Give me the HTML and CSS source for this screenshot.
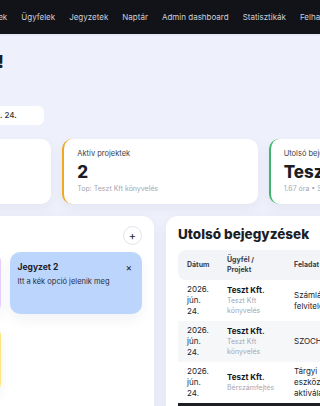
FILE: index.html
```html
<!DOCTYPE html>
<html lang="hu">
<head>
    <meta charset="UTF-8">
    <meta name="viewport" content="width=device-width, initial-scale=1.0">
    <title>Irányítópult</title>
    <link rel="stylesheet" href="styles.css">
</head>
<body>
<div class="page">
    <nav class="topbar">
        <span class="brand">Könyvelő</span>
        <a href="#">Főoldal</a>
        <a href="#">Projektek</a>
        <a href="#">Ügyfelek</a>
        <a href="#">Jegyzetek</a>
        <a href="#">Naptár</a>
        <a href="#">Admin dashboard</a>
        <a href="#">Statisztikák</a>
        <a href="#">Felhasználók</a>
    </nav>

    <main class="content">
        <h1 class="greeting">Üdv újra, Admin!</h1>
        <p class="subtitle">Áttekintés</p>
        <div class="today">
            <span class="today-label">Napi áttekintés dátuma:</span>
            <span class="date-pill">2026. jún. 24.</span>
        </div>

        <section class="stats">
            <div class="stat-card stat-blue">
                <div class="stat-label">Mai munkaidő</div>
                <div class="stat-value">3.2 óra</div>
                <div class="stat-sub">2 bejegyzés</div>
            </div>
            <div class="stat-card stat-orange">
                <div class="stat-label">Aktív projektek</div>
                <div class="stat-value">2</div>
                <div class="stat-sub">Top: Teszt Kft könyvelés</div>
            </div>
            <div class="stat-card stat-green">
                <div class="stat-label">Utolsó bejegyzés</div>
                <div class="stat-value">Teszt Kft.</div>
                <div class="stat-sub">1.67 óra • Számlák felvitele</div>
            </div>
        </section>

        <section class="lower">
            <div class="panel notes-panel">
                <div class="panel-head">
                    <h2>Jegyzetek</h2>
                    <button class="add-btn" type="button">+</button>
                </div>
                <div class="notes-grid">
                    <div class="note note-purple">
                        <div class="note-head"><b>Jegyzet 1</b><span class="note-close">×</span></div>
                        <p>Lila jegyzet</p>
                    </div>
                    <div class="note note-blue">
                        <div class="note-head"><b>Jegyzet 2</b><span class="note-close">×</span></div>
                        <p>Itt a kék opció jelenik meg</p>
                    </div>
                    <div class="note note-yellow">
                        <div class="note-head"><b>Jegyzet 3</b><span class="note-close">×</span></div>
                        <p>Sárga jegyzet</p>
                    </div>
                </div>
            </div>

            <div class="panel entries-panel">
                <h2>Utolsó bejegyzések</h2>
                <div class="table-wrap">
                    <table>
                        <colgroup>
                            <col class="col-date">
                            <col class="col-client">
                            <col class="col-task">
                            <col class="col-hours">
                        </colgroup>
                        <thead>
                        <tr>
                            <th>Dátum</th>
                            <th>Ügyfél / Projekt</th>
                            <th>Feladat</th>
                            <th>Óra</th>
                        </tr>
                        </thead>
                        <tbody>
                        <tr>
                            <td>2026. jún. 24.</td>
                            <td><div class="client">Teszt Kft.</div><div class="project">Teszt Kft könyvelés</div></td>
                            <td>Számlák felvitele</td>
                            <td>1.67</td>
                        </tr>
                        <tr>
                            <td>2026. jún. 24.</td>
                            <td><div class="client">Teszt Kft.</div><div class="project">Teszt Kft könyvelés</div></td>
                            <td>SZOCHO</td>
                            <td>0.5</td>
                        </tr>
                        <tr>
                            <td>2026. jún. 24.</td>
                            <td><div class="client">Teszt Kft.</div><div class="project">Bérszámfejtés</div></td>
                            <td>Tárgyi eszköz aktiválása</td>
                            <td>1.0</td>
                        </tr>
                        </tbody>
                    </table>
                </div>
            </div>
        </section>
    </main>
</div>
</body>
</html>
```

FILE: styles.css
```css
body {
    margin: 0;
    background: #eef0fb;
    font-family: Inter, "Noto Sans", sans-serif;
    color: #1c1e26;
    overflow: hidden;
}

.page {
    width: 640px;
    margin-left: -160px;
}

.topbar {
    display: flex;
    align-items: center;
    gap: 14px;
    height: 34px;
    padding: 0 16px 0 27px;
    background: #121318;
    border-bottom: 2px solid #e6e8f3;
    font-size: 8px;
}

.topbar .brand {
    color: #fff;
    font-weight: 700;
    font-size: 10px;
    margin-right: 4px;
}

.topbar a {
    color: #cdd0d8;
    text-decoration: none;
    white-space: nowrap;
}

.content {
    padding: 14px 16px 0;
}

.greeting {
    margin: 0;
    font-size: 18px;
    line-height: 24px;
    font-weight: 800;
}

.subtitle {
    margin: 6px 0 0;
    font-size: 8px;
    line-height: 12px;
    color: #8a8fa0;
}

.today {
    display: flex;
    align-items: center;
    gap: 11px;
    margin-top: 14px;
    font-size: 8px;
}

.today-label {
    color: #8a8fa0;
}

.date-pill {
    width: 72px;
    padding: 4px 8px;
    line-height: 11px;
    background: #fff;
    border-radius: 6px;
    color: #333;
    font-weight: 500;
}

.stats {
    display: grid;
    grid-template-columns: repeat(3, minmax(0, 1fr));
    gap: 11px;
    margin-top: 14px;
}

.stat-card {
    background: #fff;
    border-radius: 10px;
    border-left: 2px solid transparent;
    padding: 10px 13px;
    box-shadow: 0 4px 12px rgba(40, 50, 100, 0.05);
}

.stat-blue { border-left-color: #4f7cf0; }
.stat-orange { border-left-color: #f0a81c; }
.stat-green { border-left-color: #3fb66b; }

.stat-label {
    font-size: 7.5px;
    line-height: 10px;
    color: #3a3d47;
}

.stat-value {
    margin-top: 3px;
    font-size: 17px;
    line-height: 20px;
    font-weight: 800;
    white-space: nowrap;
}

.stat-sub {
    margin-top: 2px;
    font-size: 7px;
    line-height: 10px;
    color: #a3a7b3;
    white-space: nowrap;
}

.lower {
    display: grid;
    grid-template-columns: minmax(0, 1fr) minmax(0, 1fr);
    gap: 12px;
    margin-top: 12px;
}

.panel {
    background: #fff;
    border-radius: 12px;
    box-shadow: 0 4px 14px rgba(40, 50, 100, 0.06);
    height: 260px;
}

.notes-panel {
    padding: 10px 12px;
}

.panel-head {
    display: flex;
    align-items: center;
    justify-content: space-between;
}

.panel-head h2 {
    margin: 0;
    font-size: 12px;
}

.add-btn {
    width: 19px;
    height: 19px;
    padding: 0;
    border: 1px solid #e3e5ec;
    border-radius: 50%;
    background: #fff;
    color: #1c1e26;
    font-size: 11px;
    line-height: 16px;
    font-family: inherit;
}

.notes-grid {
    display: grid;
    grid-template-columns: minmax(0, 1fr) minmax(0, 1fr);
    gap: 12px 9px;
    margin-top: 7px;
}

.note {
    min-height: 62px;
    box-sizing: border-box;
    padding: 10px 8px;
    border-radius: 10px;
    box-shadow: 0 6px 12px rgba(40, 50, 100, 0.06);
}

.note-yellow {
    min-height: 67px;
}

.note-purple { background: #e7cdfb; }
.note-blue { background: #bcd5fc; }
.note-yellow { background: #fbe57c; }

.note-head {
    display: flex;
    justify-content: space-between;
    align-items: center;
    font-size: 8.5px;
    line-height: 10px;
    color: #1a1c28;
}

.note-close {
    font-size: 10px;
    margin-right: 2px;
}

.note p {
    margin: 5px 0 0;
    font-size: 7.5px;
    line-height: 10px;
    color: #2a2d3a;
}

.entries-panel {
    padding: 9px 12px;
    min-width: 0;
}

.entries-panel h2 {
    margin: 0;
    font-size: 13.5px;
    line-height: 18px;
    font-weight: 800;
}

.table-wrap {
    margin-top: 7px;
    border-bottom: 3px solid #1e1f24;
    overflow: hidden;
}

table {
    border-collapse: separate;
    border-spacing: 0;
    table-layout: fixed;
    width: 300px;
    font-size: 8px;
}

.col-date { width: 40px; }
.col-client { width: 67px; }
.col-task { width: 62px; }

th {
    height: 30px;
    padding: 0 9px;
    background: #f3f4f7;
    text-align: left;
    font-size: 7px;
    line-height: 10px;
    font-weight: 700;
    color: #3b3f4b;
}

th:first-child {
    border-radius: 8px 0 0 8px;
}

td {
    padding: 4px 9px;
    line-height: 11px;
    color: #22242c;
    vertical-align: middle;
}

tbody tr:nth-child(2) td {
    background: #f6f7f9;
}

.client {
    font-weight: 700;
    color: #15171d;
}

.project {
    font-size: 7px;
    line-height: 10px;
    color: #a2a7b8;
}
```
